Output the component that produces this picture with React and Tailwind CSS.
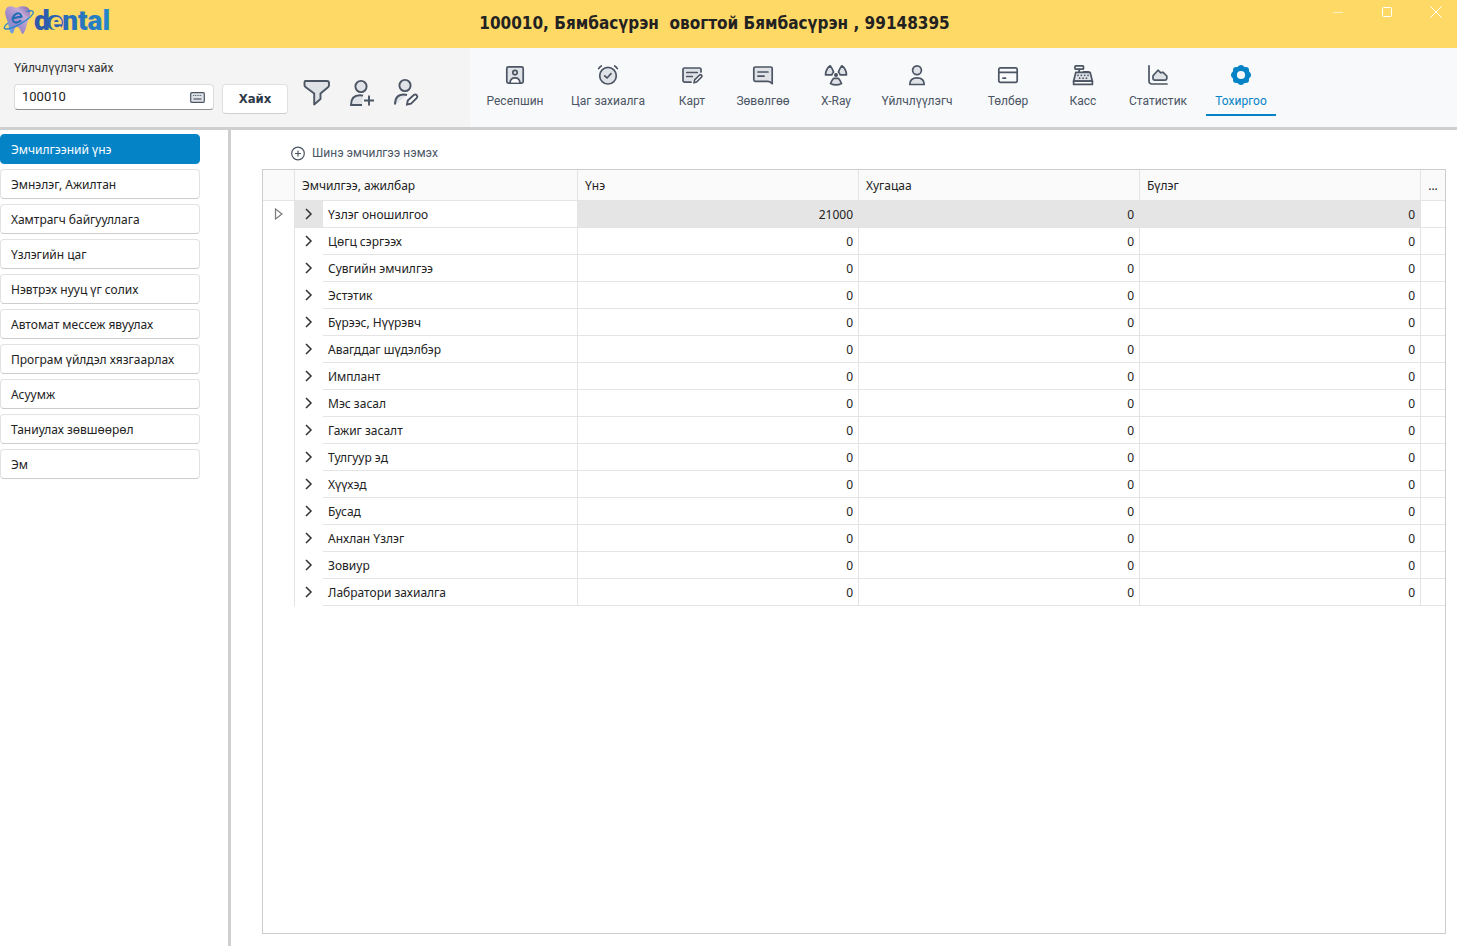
const INK = '#4b5563';
const SOFT = '#dfe2e6';

function Icon({ size = 24, children, className = '' }) {
  return (
    <svg width={size} height={size} viewBox="0 0 24 24" fill="none" stroke="currentColor" strokeWidth="1.7"
      strokeLinecap="round" strokeLinejoin="round" aria-hidden="true" className={className}>
      {children}
    </svg>
  );
}

const icons = {
  reception: (
    <Icon>
      <rect x="3.8" y="3.8" width="16.4" height="16.4" rx="1.6" fill={SOFT} />
      <circle cx="12" cy="9.6" r="2.2" fill={SOFT} />
      <path d="M7 19.6c.3-3.2 2.2-4.8 5-4.8s4.700 1.600 5 4.800" fill="#fff" />
    </Icon>
  ),
  clock: (
    <Icon>
      <circle cx="12" cy="12.700" r="8.300" fill={SOFT} />
      <path d="M8.700 12.800l2.300 2.200 4-4.300M2.700 5.600C3.300 4.500 4.200 3.600 5.300 3M21.300 5.600C20.700 4.500 19.800 3.600 18.700 3" />
    </Icon>
  ),
  card: (
    <Icon>
      <path d="M21 9V6.600A1.600 1.600 0 0 0 19.400 5H4.600A1.600 1.600 0 0 0 3 6.600v11A1.600 1.600 0 0 0 4.600 19.200H11" fill={SOFT} />
      <path d="M6.800 9.500h10.500M6.800 13.500h5.500" />
      <path d="M14 19.800l.6-3 5-4.800c1.400-1 3 .6 2 2l-5 5z" fill="#fff" />
    </Icon>
  ),
  advice: (
    <Icon>
      <path d="M21.200 20.700V5.600A1.600 1.600 0 0 0 19.600 4H4.400A1.600 1.600 0 0 0 2.800 5.600v11.200a1.600 1.600 0 0 0 1.600 1.600H17c1.700 0 3 .9 4.200 2.300z" fill={SOFT} />
      <path d="M7 9h10M7 13.200h6" />
    </Icon>
  ),
  xray: (
    <Icon>
      <path d="M1.500 11.800C1.700 8 3.400 4.800 6.200 2.800c1.400 1.700 2.600 4 3.400 6.300-.9.600-1.500 1.500-1.700 2.700z" fill={SOFT} />
      <path d="M22.500 11.800C22.300 8 20.600 4.800 17.800 2.800c-1.400 1.700-2.600 4-3.400 6.300.9.600 1.500 1.500 1.700 2.700z" fill={SOFT} />
      <path d="M9.600 15.300h4.800c1.300 1.600 2.400 3.300 3.100 5.200-3.400 1.800-7.600 1.800-11 0 .7-1.900 1.800-3.600 3.100-5.200z" fill={SOFT} />
      <circle cx="12" cy="12" r="1.200" fill="currentColor" />
    </Icon>
  ),
  client: (
    <Icon>
      <circle cx="12" cy="7.200" r="4.400" fill={SOFT} />
      <path d="M4.800 21.500c0-4.200 2.800-6.700 7.200-6.700s7.200 2.500 7.200 6.700z" fill={SOFT} />
    </Icon>
  ),
  payment: (
    <Icon>
      <rect x="2.800" y="4.800" width="18.400" height="14.600" rx="1.600" />
      <path d="M3 9.300h18M7 15.200h2.500" />
    </Icon>
  ),
  register: (
    <Icon>
      <rect x="4" y="2.800" width="8.500" height="3.400" rx=".8" />
      <path d="M8.200 6.400v3M12.500 8.800h5" />
      <path d="M4.800 9.400h14.400l2.200 8.800H2.600z" fill={SOFT} />
      <path d="M2.600 18.200h18.800v3.200H2.600z" fill="#fff" />
      <path d="M7 12.300h.1M10.300 12.300h.1M13.700 12.300h.1M17 12.300h.1M8.600 15.200h.1M12 15.200h.1M15.400 15.200h.1" />
    </Icon>
  ),
  stats: (
    <Icon>
      <path d="M3 2.800v15.400A2.800 2.800 0 0 0 5.800 21H21" />
      <path d="M7 15.500V12.800l5-5.600 2.800 2.600 2-.6L20.800 13v2.600c0 .9-.6 1.500-1.500 1.500H8.600c-.9 0-1.600-.6-1.600-1.600z" fill={SOFT} />
    </Icon>
  ),
  settings: (
    <Icon>
      <g fill="currentColor" stroke="none">
        <circle cx="12" cy="12" r="9" />
        <circle cx="12" cy="5" r="3" /><circle cx="17" cy="7" r="3" />
        <circle cx="19" cy="12" r="3" /><circle cx="17" cy="17" r="3" />
        <circle cx="12" cy="19" r="3" /><circle cx="7" cy="17" r="3" />
        <circle cx="5" cy="12" r="3" /><circle cx="7" cy="7" r="3" />
      </g>
      <circle cx="12" cy="12" r="4.100" fill="#f8f9fb" stroke="none" />
    </Icon>
  ),
};

const tabs = [
  { label: 'Ресепшин', icon: 'reception', width: 'w-[90px]' },
  { label: 'Цаг захиалга', icon: 'clock', width: 'w-24' },
  { label: 'Карт', icon: 'card', width: 'w-[72px]' },
  { label: 'Зөвөлгөө', icon: 'advice', width: 'w-[70px]' },
  { label: 'X-Ray', icon: 'xray', width: 'w-[76px]' },
  { label: 'Үйлчлүүлэгч', icon: 'client', width: 'w-[86px]' },
  { label: 'Төлбөр', icon: 'payment', width: 'w-24' },
  { label: 'Касс', icon: 'register', width: 'w-[54px]' },
  { label: 'Статистик', icon: 'stats', width: 'w-24' },
  { label: 'Тохиргоо', icon: 'settings', width: 'w-[70px]', active: true },
];

const menu = [
  'Эмчилгээний үнэ', 'Эмнэлэг, Ажилтан', 'Хамтрагч байгууллага', 'Үзлэгийн цаг', 'Нэвтрэх нууц үг солих',
  'Автомат мессеж явуулах', 'Програм үйлдэл хязгаарлах', 'Асуумж', 'Таниулах зөвшөөрөл', 'Эм',
];

const rows = [
  ['Үзлэг оношилгоо', 21000], ['Цөгц сэргээх', 0], ['Сувгийн эмчилгээ', 0], ['Эстэтик', 0], ['Бүрээс, Нүүрэвч', 0],
  ['Авагддаг шүдэлбэр', 0], ['Имплант', 0], ['Мэс засал', 0], ['Гажиг засалт', 0], ['Тулгуур эд', 0],
  ['Хүүхэд', 0], ['Бусад', 0], ['Анхлан Үзлэг', 0], ['Зовиур', 0], ['Лабратори захиалга', 0],
];

function Logo() {
  return (
    <svg width="116" height="40" viewBox="0 0 116 40" role="img" aria-label="e dental">
      <defs>
        <linearGradient id="tooth" x1="0" y1="1" x2="1" y2="0">
          <stop offset="0" stopColor="#3fb4ee" /><stop offset=".35" stopColor="#9a86c8" />
          <stop offset=".7" stopColor="#c3a9d6" /><stop offset="1" stopColor="#7a63a8" />
        </linearGradient>
        <linearGradient id="word" gradientUnits="userSpaceOnUse" x1="35" y1="0" x2="111" y2="0">
          <stop offset="0" stopColor="#2f57a8" /><stop offset="1" stopColor="#2388cc" />
        </linearGradient>
      </defs>
      <path d="M6 9c1.500-3.500 6-3.200 10-1 5-2.500 11-2.600 13.500 1.500 1.800 4-.5 8.500-2 12.500-1.300 4.500-2 9.500-4.500 12-2 .5-2.500-7-6-7s-2.500 7-5 6.600C9 32.500 9 26 7.500 21.500 6 17 4 13 6 9z" fill="url(#tooth)" />
      <path d="M12.500 18.200l9-1.600c-.4-3-3-4.200-5.500-2.800-3.300 1.800-4.500 6-2.200 8 1.700 1.400 4.500.6 6.700-1" fill="none" stroke="#1d6cb5" strokeWidth="2" strokeLinecap="round" />
      <path d="M7.500 23.500C3.500 26.500 3.500 29 6 29c6 .3 24-9.500 27-15.500 1.200-3-2-3.300-6-2" fill="none" stroke="#2a86cb" strokeWidth="1.300" strokeLinecap="round" />
      <rect x="47" y="15" width="16" height="15" rx="7" fill="#2c62b0" />
      <text x="34" y="30" fontFamily="Roboto, sans-serif" fontWeight="900" fontSize="28" fill="url(#word)">
        d<tspan fontSize="23" fontWeight="700" fill="#ffd966">e</tspan>ntal
      </text>
    </svg>
  );
}

function TitleBar() {
  return (
    <header className="flex h-12 shrink-0 items-start justify-between bg-[#ffd966]">
      <div className="w-[200px]"><Logo /></div>
      <h1 className="mt-[11px] whitespace-pre font-['DejaVu_Sans_Condensed','DejaVu_Sans',sans-serif] text-[17px] leading-6 font-bold text-[#222]">
        100010, Бямбасүрэн  овогтой Бямбасүрэн , 99148395
      </h1>
      <div className="flex w-[228px] justify-end gap-[25px] pr-[9px] text-white">
        <button aria-label="Minimize" className="h-6 w-6">
          <svg width="24" height="24" viewBox="0 0 24 24"><path d="M7 12.500h10" stroke="#fff" strokeOpacity=".65" /></svg>
        </button>
        <button aria-label="Maximize" className="h-6 w-6">
          <svg width="24" height="24" viewBox="0 0 24 24"><rect x="7.500" y="7.500" width="9" height="9" rx="1" fill="none" stroke="#fff" /></svg>
        </button>
        <button aria-label="Close" className="h-6 w-6">
          <svg width="24" height="24" viewBox="0 0 24 24"><path d="M6.500 6.500l11 11M17.500 6.500l-11 11" stroke="#fff" /></svg>
        </button>
      </div>
    </header>
  );
}

function SearchPanel() {
  return (
    <form className="flex w-[470px] shrink-0 bg-[#f4f4f4] pl-3.5" onSubmit={(e) => e.preventDefault()}>
      <div className="w-[200px] pt-3">
        <label htmlFor="client" className="block text-xs leading-4 text-[#333]">Үйлчлүүлэгч хайх</label>
        <div className="mt-2 flex h-[26px] items-center rounded border border-[#dcdcdc] border-b-[#8f8f8f] bg-white pr-2 pl-[7px]">
          <input id="client" defaultValue="100010" className="min-w-0 flex-1 bg-transparent text-[13px] text-[#222] outline-none" />
          <svg width="15" height="11" viewBox="0 0 15 11" fill="#dfe2e6" stroke={INK} aria-hidden="true">
            <rect x=".7" y=".7" width="13.600" height="9.600" rx="1" strokeWidth="1.200" />
            <path d="M3 3.500h9" strokeDasharray="1.200 1" /><path d="M3.500 7h8" strokeWidth="1.200" />
          </svg>
        </div>
      </div>
      <button type="submit" className="mt-9 ml-2 h-[30px] w-[66px] rounded border border-[#e0e0e0] border-b-[#cfcfcf] bg-white font-['DejaVu_Sans_Condensed','DejaVu_Sans',sans-serif] text-[13px] font-bold text-[#2f3a48]">
        Хайх
      </button>
      <div className="mt-[29px] ml-[13px] flex gap-3 text-[#4b5563]">
        <button type="button" aria-label="Шүүлтүүр" className="h-8 w-8">
          <svg width="32" height="32" viewBox="0 0 32 32" fill={SOFT} stroke="currentColor" strokeWidth="1.900" strokeLinejoin="round">
            <path d="M4.500 4h21.500c1.300 0 2 .7 2 2v2.200c0 .8-.3 1.400-1 2L19.500 16.500v5.500L13.200 27.500V16.500L4.800 10.200C4 9.600 3.500 9 3.500 8.200V5.500C3.500 4.500 3.700 4 4.500 4z" />
          </svg>
        </button>
        <button type="button" aria-label="Үйлчлүүлэгч нэмэх" className="h-8 w-8">
          <svg width="32" height="32" viewBox="0 0 32 32" fill={SOFT} stroke="currentColor" strokeWidth="1.900">
            <path d="M18 18.700c-1.200-.4-2-.5-3.200-.5C9.500 18.200 6 21.500 6 28h11" />
            <circle cx="16" cy="9.500" r="5.600" /><path d="M24 18.500v10M19 23.500h10" />
          </svg>
        </button>
        <button type="button" aria-label="Үйлчлүүлэгч засах" className="h-8 w-8">
          <svg width="32" height="32" viewBox="0 0 32 32" fill={SOFT} stroke="currentColor" strokeWidth="1.900">
            <path d="M18 18c-1.200-.4-2-.5-3.200-.5C9.500 17.500 6 20.500 6 27.500" />
            <circle cx="16" cy="8.500" r="5.600" />
            <path d="M18 27.500l.8-4 6-5.500c2.200-1.500 4.500.8 3 3l-5.800 5.700z" fill="#fff" />
          </svg>
        </button>
      </div>
    </form>
  );
}

function Toolbar() {
  return (
    <div className="flex h-[82px] shrink-0 border-b-[3px] border-[#cfcfcf]">
      <SearchPanel />
      <nav className="flex flex-1 bg-[#f8f9fb]">
        {tabs.map((t) => (
          <button key={t.label}
            className={`${t.width} mt-[15px] flex h-[53px] flex-col items-center gap-1 border-b-2 text-xs leading-5 whitespace-nowrap ${t.active ? 'border-[#0583c7] text-[#0583c7]' : 'border-transparent text-[#4b5563]'}`}>
            {icons[t.icon]}
            {t.label}
          </button>
        ))}
      </nav>
    </div>
  );
}

function Sidebar() {
  return (
    <aside className="w-[231px] shrink-0 border-r-[3px] border-[#cfcfcf] pt-1">
      <ul className="flex w-[200px] flex-col gap-[5px] font-['Noto_Sans',sans-serif] text-xs">
        {menu.map((m, i) => (
          <li key={m}>
            <button className={`h-[30px] w-full rounded border px-2.5 pt-0.5 text-left ${i === 0 ? 'border-[#0583c7] bg-[#0583c7] text-white' : 'border-[#e2e2e2] border-b-[#cdcdcd] bg-white text-[#222]'}`}>
              {m}
            </button>
          </li>
        ))}
      </ul>
    </aside>
  );
}

function PriceTable() {
  const line = 'border-[#e4e4e4]';
  return (
    <div className="flex-1 border border-[#cdcdcd] font-['Noto_Sans',sans-serif] text-xs text-[#222]">
      <table className="w-full table-fixed border-separate border-spacing-0">
        <colgroup><col className="w-8" /><col className="w-[283px]" /><col /><col /><col /><col className="w-6" /></colgroup>
        <thead>
          <tr className="h-[31px] bg-[#fafafa] text-left">
            <th aria-label="Сонгосон мөр" className={`border-r border-b ${line}`} />
            {['Эмчилгээ, ажилбар', 'Үнэ', 'Хугацаа', 'Бүлэг'].map((h) => (
              <th key={h} className={`border-r border-b px-[7px] pt-0.5 pb-0 font-normal ${line}`}>{h}</th>
            ))}
            <th className={`border-b px-0 pt-0.5 pb-0 text-center font-normal ${line}`}>...</th>
          </tr>
        </thead>
        <tbody>
          {rows.map(([name, price], i) => (
            <tr key={name} className="h-[27px]">
              <td className={`border-r px-0 pt-0 pb-0.5 ${line}`}>
                {i === 0 && (
                  <svg width="10" height="12" viewBox="0 0 10 12" className="mx-auto" aria-hidden="true">
                    <path d="M1.500 1v10l6.500-5z" fill="none" stroke="#7a7a7a" strokeWidth="1.200" />
                  </svg>
                )}
              </td>
              <td className={`border-r p-0 ${line}`}>
                <div className="flex h-[27px]">
                  <button aria-label={`Дэлгэх: ${name}`} className={`flex w-7 items-center justify-center pb-0.5 ${i === 0 ? 'bg-[#e5e5e5]' : ''}`}>
                    <svg width="8" height="12" viewBox="0 0 8 12" aria-hidden="true"><path d="M1 1l5 5-5 5" fill="none" stroke="#333" strokeWidth="1.500" /></svg>
                  </button>
                  <span className={`flex flex-1 items-center border-b pt-0.5 pl-[5px] ${line}`}>{name}</span>
                </div>
              </td>
              {[price, 0, 0].map((v, c) => (
                <td key={c} className={`border-r border-b pt-0.5 pr-[5px] pb-0 text-right ${line} ${i === 0 ? 'bg-[#e5e5e5]' : ''}`}>{v}</td>
              ))}
              <td className={`border-b p-0 ${line}`} />
            </tr>
          ))}
        </tbody>
      </table>
    </div>
  );
}

export default function App() {
  return (
    <div className="flex min-h-screen flex-col bg-white font-[Roboto,sans-serif]">
      <TitleBar />
      <Toolbar />
      <div className="flex flex-1">
        <Sidebar />
        <main className="flex flex-1 flex-col pt-3.5 pr-[11px] pb-3 pl-[31px]">
          <button className="mb-1.5 ml-7 flex items-center gap-1.5 self-start text-xs leading-[19px] text-[#4b5563]">
            <svg width="16" height="16" viewBox="0 0 16 16" fill="none" stroke="currentColor" strokeWidth="1.200" aria-hidden="true">
              <circle cx="8" cy="7.500" r="6.300" /><path d="M8 4.500v6M5 7.500h6" />
            </svg>
            Шинэ эмчилгээ нэмэх
          </button>
          <PriceTable />
        </main>
      </div>
    </div>
  );
}
